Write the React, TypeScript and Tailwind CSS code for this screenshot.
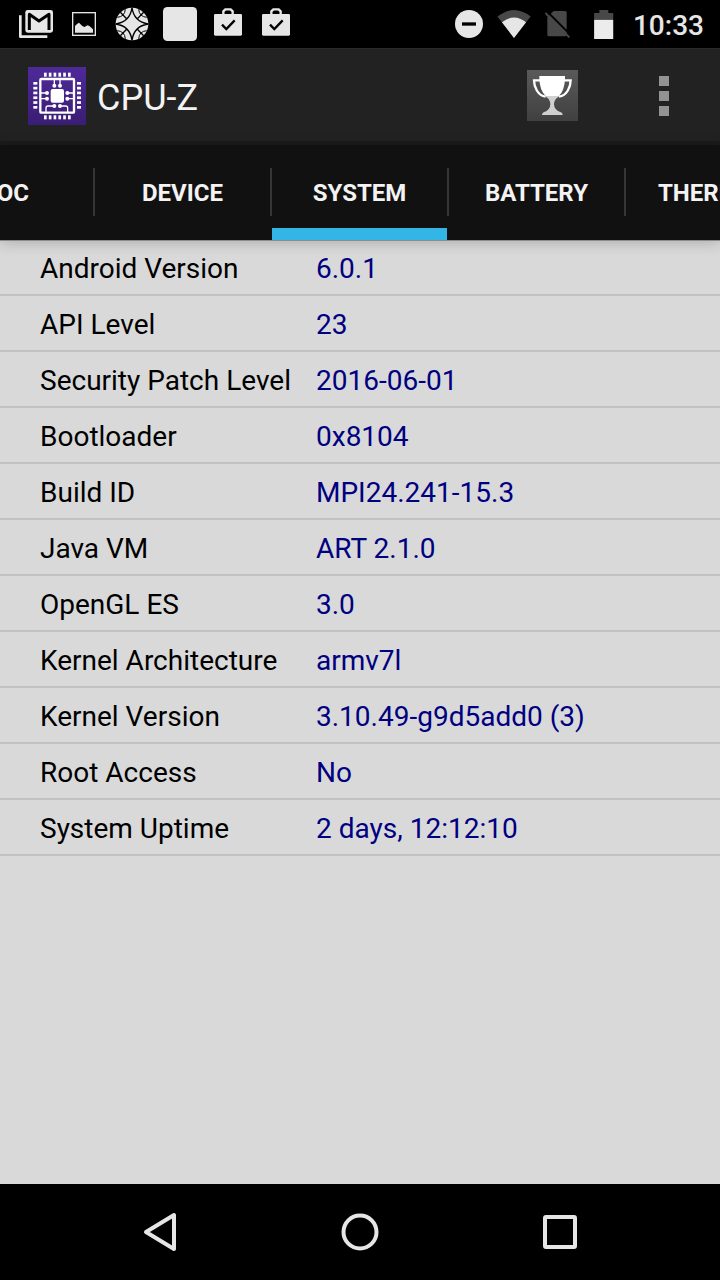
import React, { useState } from 'react'

const tabs = ['SOC', 'DEVICE', 'SYSTEM', 'BATTERY', 'THERMAL']

const systemInfo = [
  { label: 'Android Version', value: '6.0.1' },
  { label: 'API Level', value: '23' },
  { label: 'Security Patch Level', value: '2016-06-01' },
  { label: 'Bootloader', value: '0x8104' },
  { label: 'Build ID', value: 'MPI24.241-15.3' },
  { label: 'Java VM', value: 'ART 2.1.0' },
  { label: 'OpenGL ES', value: '3.0' },
  { label: 'Kernel Architecture', value: 'armv7l' },
  { label: 'Kernel Version', value: '3.10.49-g9d5add0 (3)' },
  { label: 'Root Access', value: 'No' },
  { label: 'System Uptime', value: '2 days, 12:12:10' },
]

function GmailIcon() {
  return (
    <svg viewBox="0 0 144 144" className="size-12" aria-hidden="true">
      <path d="M25 46v64h81" fill="none" stroke="#e6e6e6" strokeWidth="8" strokeLinejoin="round" />
      <rect x="40" y="30" width="83" height="68" rx="7" fill="#e6e6e6" />
      <path
        d="M52 90V43l29 20 30-20v47"
        fill="none"
        stroke="#000"
        strokeWidth="9"
        strokeLinejoin="round"
      />
    </svg>
  )
}

function PictureIcon() {
  return (
    <svg viewBox="0 0 144 144" className="size-12" aria-hidden="true">
      <rect x="38" y="38" width="68" height="68" fill="none" stroke="#e6e6e6" strokeWidth="4" />
      <path d="M45 98V78l6-6 6-4 10 10 6 3 10-5 6 3 10 9v10z" fill="#e6e6e6" />
    </svg>
  )
}

function StarWheelIcon() {
  return (
    <svg viewBox="0 0 144 144" className="size-12" aria-hidden="true">
      <circle cx="72" cy="72" r="49" fill="#e6e6e6" />
      <g fill="none" stroke="#000" strokeWidth="4">
        <path d="M72 23Q66 66 23 72Q66 78 72 121Q78 78 121 72Q78 66 72 23z" fill="#e6e6e6" />
        <path d="M37 37l19 19M107 37L88 56M37 107l19-19M107 107L88 88" />
        <path
          d="M52 28Q50 50 28 52M92 28Q94 50 116 52M52 116Q50 94 28 92M92 116Q94 94 116 92"
          strokeWidth="3"
        />
      </g>
    </svg>
  )
}

function BlankIcon() {
  return (
    <svg viewBox="0 0 144 144" className="size-12" aria-hidden="true">
      <rect x="21" y="21" width="102" height="102" rx="13" fill="#e6e6e6" />
    </svg>
  )
}

function PlayBagIcon() {
  return (
    <svg viewBox="0 0 144 144" className="size-12" aria-hidden="true">
      <path d="M58 44V34l6-6h16l6 6v10" fill="none" stroke="#e6e6e6" strokeWidth="7" />
      <rect x="30" y="42" width="84" height="65" rx="4" fill="#e6e6e6" />
      <path d="M54 74l13 13 25-26" fill="none" stroke="#000" strokeWidth="7" />
    </svg>
  )
}

function StatusBar() {
  return (
    <div className="flex h-12 items-center justify-between bg-black pl-3 pr-4">
      <div className="flex">
        <GmailIcon />
        <PictureIcon />
        <StarWheelIcon />
        <BlankIcon />
        <PlayBagIcon />
        <PlayBagIcon />
      </div>
      <div className="flex items-center text-[#e6e6e6]">
        <div className="flex items-center gap-[14px]">
          <svg viewBox="0 0 84 84" className="size-7" aria-hidden="true">
            <circle cx="42" cy="42" r="42" fill="#e6e6e6" />
            <path d="M21 42h42" stroke="#000" strokeWidth="10" />
          </svg>
          <svg viewBox="0 0 102 86" className="h-7 w-[34px]" aria-hidden="true">
            <path d="M0 20Q51-20 102 20L51 86z" fill="#484848" />
            <path d="M14 38Q51 8 88 38L51 86z" fill="#e6e6e6" />
          </svg>
          <svg viewBox="0 0 78 84" className="h-7 w-[26px]" aria-hidden="true">
            <path d="M26 3h34q5 0 5 5v66q0 5-5 5H12q-5 0-5-5V22z" fill="#484848" />
            <path d="M6 4l70 70" stroke="#000" strokeWidth="6" />
            <path d="M1 9l72 73" stroke="#484848" strokeWidth="6" />
          </svg>
        </div>
        <svg viewBox="0 0 60 88" className="ml-[23px] h-[29px] w-5" aria-hidden="true">
          <path d="M16 0h27v9h15v22H0V9h16z" fill="#484848" />
          <path d="M0 30h58v58H0z" fill="#ececec" />
        </svg>
        <time className="ml-[19px] pt-1 text-[28px] leading-8 font-medium">10:33</time>
      </div>
    </div>
  )
}

function CpuLogo() {
  const pins = [0, 1, 2, 3, 4, 5]
  return (
    <svg viewBox="0 0 174 174" className="size-[58px]" aria-hidden="true">
      <defs>
        <linearGradient id="logo-bg" x1="0" y1="0" x2="0" y2="1">
          <stop offset="0" stopColor="#4e2a9a" />
          <stop offset="1" stopColor="#3a1d74" />
        </linearGradient>
      </defs>
      <rect width="174" height="174" fill="url(#logo-bg)" />
      <g fill="#fff">
        {pins.map((i) => (
          <g key={i}>
            <rect x={48 + i * 14.4} y="17" width="8" height="12" />
            <rect x={48 + i * 14.4} y="145" width="8" height="12" />
            <rect x="16" y={45 + i * 14.4} width="12" height="8" />
            <rect x="147" y={45 + i * 14.4} width="12" height="8" />
          </g>
        ))}
        <rect x="68" y="66" width="40" height="41" rx="6" />
        <circle cx="79" cy="56" r="6" />
        <circle cx="96" cy="56" r="6" />
        <circle cx="57" cy="78" r="6" />
        <circle cx="57" cy="95" r="6" />
        <circle cx="118" cy="78" r="6" />
        <circle cx="118" cy="95" r="6" />
        <circle cx="79" cy="117" r="6" />
        <circle cx="96" cy="117" r="6" />
      </g>
      <g fill="none" stroke="#fff">
        <rect x="37" y="36" width="101" height="101" rx="3" strokeWidth="7" />
        <path
          d="M79 56V38M96 56V38M57 78H38M57 95H38M118 78h19M118 95h19M79 117H60q-6 0-6 6v13M96 117h17q6 0 6 6v13"
          strokeWidth="4"
        />
      </g>
    </svg>
  )
}

function TrophyIcon() {
  return (
    <svg viewBox="0 0 153 153" className="size-[51px]" aria-hidden="true">
      <defs>
        <linearGradient id="trophy-bg" x1="0" y1="0" x2="0" y2="1">
          <stop offset="0" stopColor="#5a5a5a" />
          <stop offset="1" stopColor="#404040" />
        </linearGradient>
      </defs>
      <rect width="153" height="153" fill="url(#trophy-bg)" />
      <path
        d="M42 31H21C21 50 32 77 56 80M110 31h21c0 19-11 46-35 49"
        fill="none"
        stroke="#fff"
        strokeWidth="7"
      />
      <path d="M37 18h77v8q-1 34-18 52H56Q38 60 37 26z" fill="#fff" />
      <path
        d="M54 78h44q-17 9-17 25 0 17 21 24 5 2 5 8H45q0-6 5-8 20-7 20-24 0-16-16-25z"
        fill="#d0d0d0"
      />
    </svg>
  )
}

function ActionBar() {
  return (
    <header className="flex h-[97px] items-center border-t border-b-4 border-t-[#2a2a2a] border-b-[#1b1b1b] bg-[#222222] pt-px pl-7 pr-8">
      <CpuLogo />
      <h1 className="ml-[11px] flex-1 pt-1 text-4xl leading-10 font-normal text-[#f3f3f3]">CPU-Z</h1>
      <button type="button" aria-label="Ranking">
        <TrophyIcon />
      </button>
      <button
        type="button"
        aria-label="More options"
        className="ml-[62px] flex w-12 flex-col items-center gap-[5px]"
      >
        <span className="size-[10px] bg-[#939393]" />
        <span className="size-[10px] bg-[#939393]" />
        <span className="size-[10px] bg-[#939393]" />
      </button>
    </header>
  )
}

interface TabStripProps {
  active: string
  onSelect: (tab: string) => void
}

function TabStrip({ active, onSelect }: TabStripProps) {
  return (
    <div
      role="tablist"
      className="z-10 flex h-[95px] justify-center overflow-hidden bg-[#111111] pr-px shadow-[0_1px_0_#8c8c8c,0_2px_14px_rgba(0,0,0,0.22)]"
    >
      {tabs.map((tab, i) => (
        <React.Fragment key={tab}>
          {i > 0 && <span className="mt-[23px] h-12 w-[2px] shrink-0 bg-[#363636]" />}
          <button
            type="button"
            role="tab"
            aria-selected={tab === active}
            onClick={() => onSelect(tab)}
            className={`w-[175px] shrink-0 border-b-12 pt-3 text-2xl leading-8 font-bold text-[#f3f3f3] ${
              tab === active ? 'border-[#33b5e5]' : 'border-transparent'
            }`}
          >
            {tab}
          </button>
        </React.Fragment>
      ))}
    </div>
  )
}

function NavigationBar() {
  return (
    <nav className="flex h-24 items-center justify-center bg-black">
      <button type="button" aria-label="Back" className="flex w-[200px] justify-center">
        <svg viewBox="0 0 48 48" className="size-12" aria-hidden="true">
          <path d="M38 7v34L10 24z" fill="none" stroke="#e6e6e6" strokeWidth="4" strokeLinejoin="round" />
        </svg>
      </button>
      <button type="button" aria-label="Home" className="flex w-[200px] justify-center">
        <svg viewBox="0 0 48 48" className="size-12" aria-hidden="true">
          <circle cx="24" cy="24" r="16.5" fill="none" stroke="#e6e6e6" strokeWidth="4" />
        </svg>
      </button>
      <button type="button" aria-label="Recent apps" className="flex w-[200px] justify-center">
        <svg viewBox="0 0 48 48" className="size-12" aria-hidden="true">
          <rect x="9" y="9" width="30" height="30" rx="1" fill="none" stroke="#e6e6e6" strokeWidth="4" />
        </svg>
      </button>
    </nav>
  )
}

export default function App() {
  const [activeTab, setActiveTab] = useState('SYSTEM')

  return (
    <div className="flex min-h-screen flex-col overflow-hidden bg-[#d9d9d9] font-[Roboto,sans-serif]">
      <StatusBar />
      <ActionBar />
      <TabStrip active={activeTab} onSelect={setActiveTab} />
      <main className="flex-1">
        <table className="w-full border-separate border-spacing-0 text-left text-[28px] leading-8">
          <tbody>
            {systemInfo.map((row) => (
              <tr key={row.label} className="h-14">
                <th
                  scope="row"
                  className="w-[316px] border-b-2 border-[#c2c2c2] pt-1 pl-10 font-normal whitespace-nowrap text-black"
                >
                  {row.label}
                </th>
                <td className="border-b-2 border-[#c2c2c2] pt-1 text-[#000080]">{row.value}</td>
              </tr>
            ))}
          </tbody>
        </table>
      </main>
      <NavigationBar />
    </div>
  )
}
